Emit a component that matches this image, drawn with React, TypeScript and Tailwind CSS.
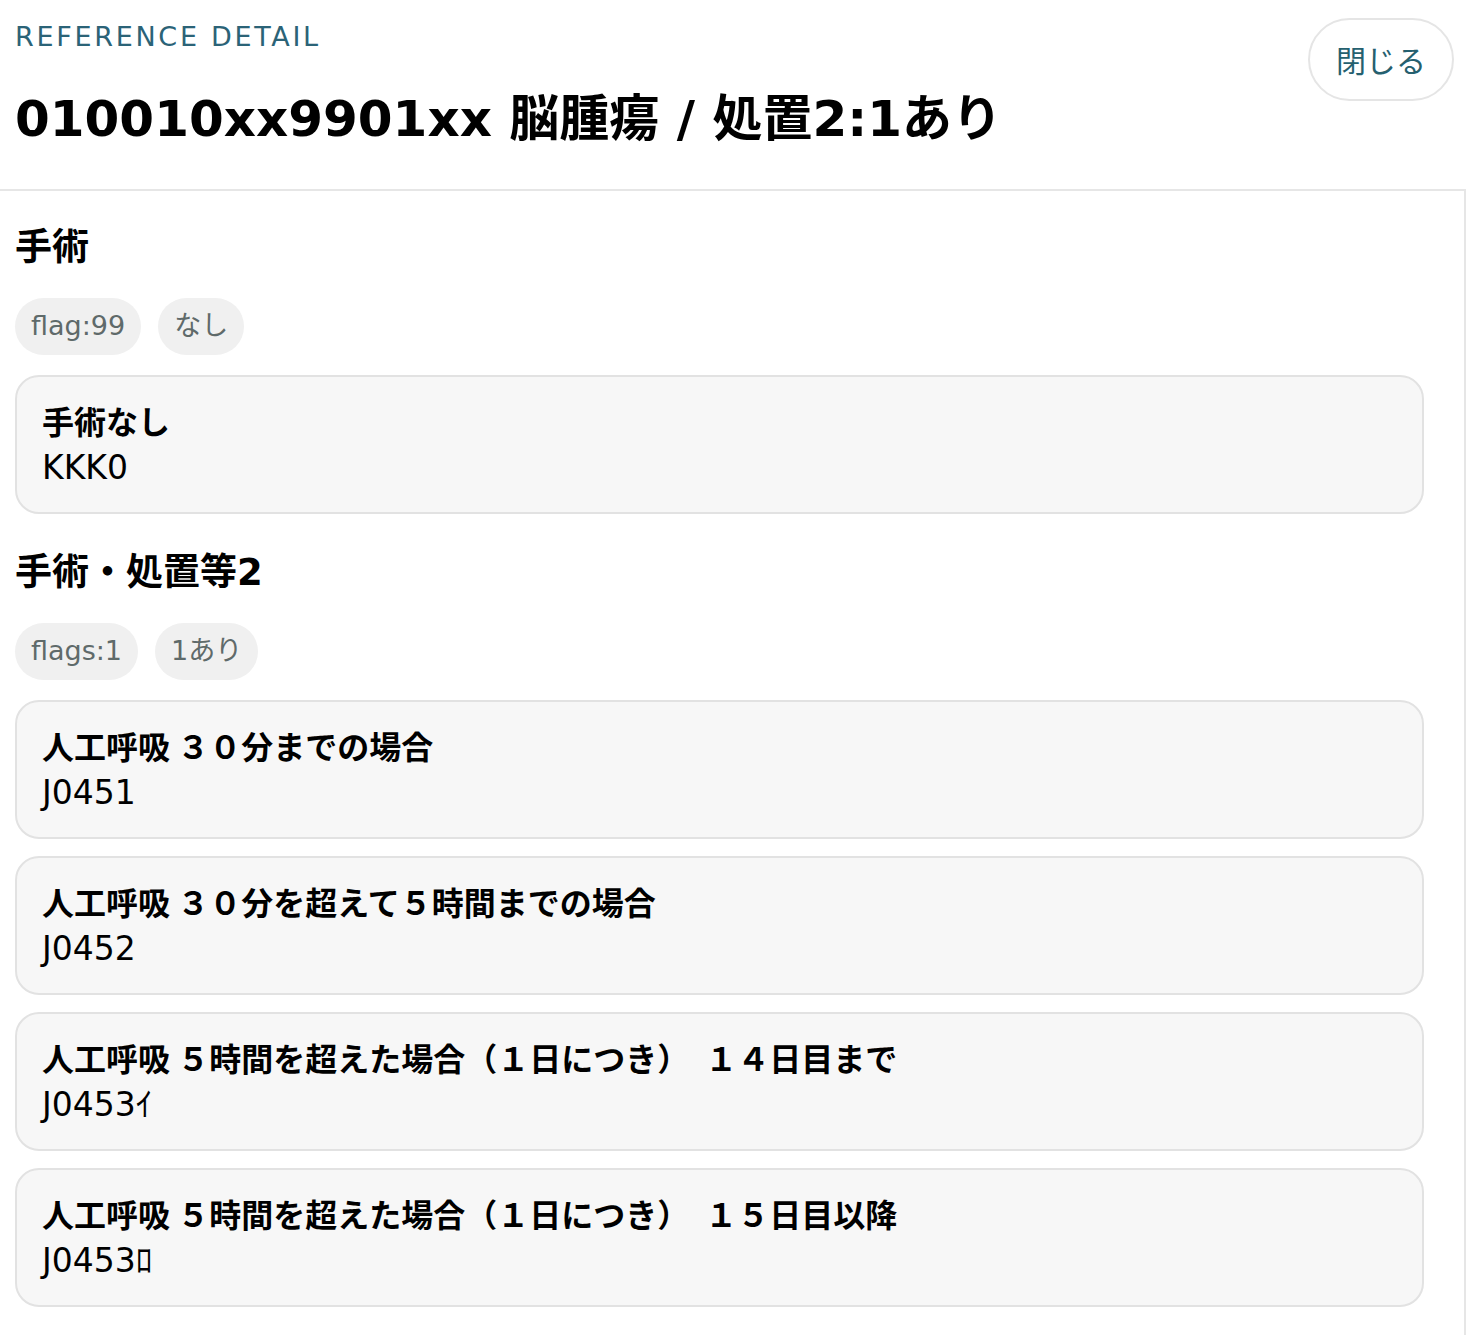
const sections = [
  {
    title: "手術",
    chips: ["flag:99", "なし"],
    items: [{ name: "手術なし", code: "KKK0" }],
  },
  {
    title: "手術・処置等2",
    chips: ["flags:1", "1あり"],
    items: [
      { name: "人工呼吸 ３０分までの場合", code: "J0451" },
      { name: "人工呼吸 ３０分を超えて５時間までの場合", code: "J0452" },
      { name: "人工呼吸 ５時間を超えた場合（１日につき）　１４日目まで", code: "J0453ｲ" },
      { name: "人工呼吸 ５時間を超えた場合（１日につき）　１５日目以降", code: "J0453ﾛ" },
    ],
  },
];

export default function App() {
  return (
    <div className="min-h-screen bg-white text-black font-['DejaVu_Sans','Noto_Sans_CJK_JP',sans-serif]">
      {/* header */}
      <header className="flex items-start justify-between pl-[15px] pr-[12px] pt-[17px] h-[189px]">
        <div className="flex flex-col">
          <div className="text-[27px] leading-[40px] tracking-[0.1em] text-[#2b6377]">
            REFERENCE DETAIL
          </div>
          <h1 className="mt-[29px] text-[50px] leading-[66px] font-bold">
            010010xx9901xx 脳腫瘍 / 処置2:1あり
          </h1>
        </div>
        <button className="w-[146px] h-[83px] mt-[1px] rounded-full border-2 border-[#e5e5e5] bg-white text-[30px] text-[#25606f] font-['Noto_Sans_CJK_JP',sans-serif]">
          閉じる
        </button>
      </header>

      <main className="border-t-2 border-r-2 border-[#e6e6e6] pl-[15px] pr-[40px] pt-[31px] pb-[28px]">
        {sections.map((s, i) => (
          <section key={s.title} className={i > 0 ? "mt-[33px]" : ""}>
            <h2 className="text-[37px] leading-[52px] font-bold">{s.title}</h2>
            <div className="mt-[24px] flex gap-[17px]">
              {s.chips.map((c) => (
                <span
                  key={c}
                  className="h-[57px] px-[16px] flex items-center rounded-full bg-[#f0f0f0] text-[27px] text-[#5f6a6a]"
                >
                  {c}
                </span>
              ))}
            </div>
            <div className="mt-[20px] flex flex-col gap-[17px]">
              {s.items.map((it) => (
                <div
                  key={it.code}
                  className="h-[139px] rounded-[24px] border-2 border-[#e2e2e2] bg-[#f7f7f7] px-[25px] pt-[20px]"
                >
                  <div className="text-[32px] leading-[46px] font-bold font-['Noto_Sans_CJK_JP',sans-serif]">
                    {it.name}
                  </div>
                  <div className="text-[33px] leading-[50px]">{it.code}</div>
                </div>
              ))}
            </div>
          </section>
        ))}
      </main>
    </div>
  );
}
